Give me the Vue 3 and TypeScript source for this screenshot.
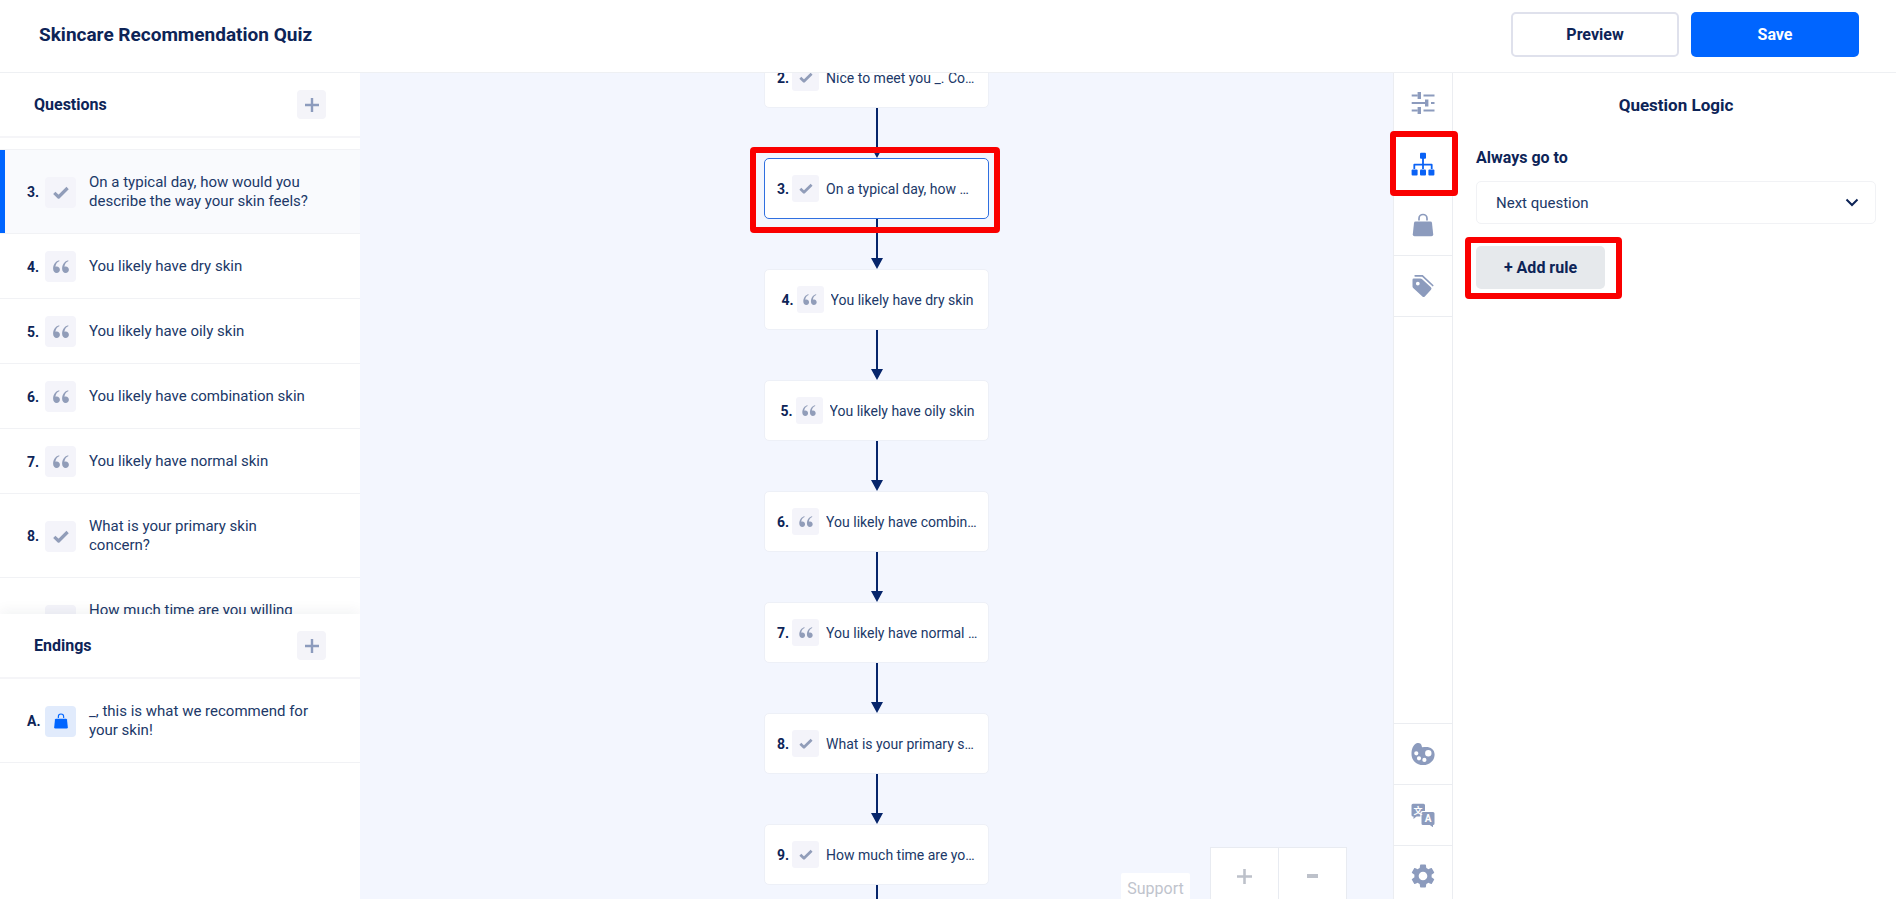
<script setup lang="ts">
import { ref } from 'vue'

type Kind = 'check' | 'quote'
interface Question {
  id: number
  kind: Kind
  title: string
}

const quizName = 'Skincare Recommendation Quiz'
const selectedId = ref(3)
const target = ref('next')
const activeTab = ref('logic')

const questions: Question[] = [
  { id: 3, kind: 'check', title: 'On a typical day, how would you describe the way your skin feels?' },
  { id: 4, kind: 'quote', title: 'You likely have dry skin' },
  { id: 5, kind: 'quote', title: 'You likely have oily skin' },
  { id: 6, kind: 'quote', title: 'You likely have combination skin' },
  { id: 7, kind: 'quote', title: 'You likely have normal skin' },
  { id: 8, kind: 'check', title: 'What is your primary skin concern?' },
  { id: 9, kind: 'check', title: 'How much time are you willing to\u00a0spend?' },
]

const nodes: Question[] = [{ id: 2, kind: 'check', title: 'Nice to meet you _. Could you tell us more?' }, ...questions]

const topTabs = [
  { id: 'sliders', label: 'Properties' },
  { id: 'logic', label: 'Logic' },
  { id: 'bag', label: 'Products' },
  { id: 'tags', label: 'Tags' },
]
const bottomTabs = [
  { id: 'palette', label: 'Design' },
  { id: 'translate', label: 'Translations' },
  { id: 'gear', label: 'Settings' },
]
</script>

<template>
  <div class="app">
    <svg class="sprite" aria-hidden="true">
      <symbol id="i-check" viewBox="0 0 16 13">
        <path d="M1.3 6.8 5.6 11 14.6 2" fill="none" stroke="currentColor" stroke-width="3.2" stroke-linejoin="round" />
      </symbol>
      <symbol id="i-quote" viewBox="0 0 16 13">
        <path d="M6.3.2C2.6 1 .1 4.4.1 8.8.1 11.4 1.6 13 3.6 13c1.9 0 3.3-1.4 3.3-3.3S5.500 6.400 3.800 6.400c-.5 0-1 .1-1.400.3C2.700 4 4 2.100 6.300 1.200z" fill="currentColor" />
        <path d="M15.3.2C11.6 1 9.1 4.4 9.1 8.8c0 2.600 1.500 4.200 3.500 4.200 1.900 0 3.300-1.400 3.300-3.300s-1.400-3.300-3.100-3.300c-.5 0-1 .1-1.400.3.3-2.700 1.600-4.600 3.900-5.500z" fill="currentColor" />
      </symbol>
      <symbol id="i-bag" viewBox="0 0 24 24">
        <path d="M8 7.5V5.5a4 4 0 0 1 8 0v2" fill="none" stroke="currentColor" stroke-width="1.7" />
        <path d="M4.6 8.5h14.8q1.4 0 1.6 1.4l1.2 11.3q.1 2-1.8 2H3.6q-1.9 0-1.8-2L3 9.9q.2-1.4 1.6-1.4z" fill="currentColor" />
      </symbol>
      <symbol id="i-sliders" viewBox="0 0 24 24">
        <path d="M.7 4.5h6M12.5 4.5h11M.7 12h14M20 12h3.5M.7 19.5h6M12.5 19.5h11" stroke="currentColor" stroke-width="1.8" />
        <path d="M8.3 1v7M15.7 8.5v7M8.3 16v7" stroke="currentColor" stroke-width="3.4" />
      </symbol>
      <symbol id="i-logic" viewBox="0 0 24 24">
        <path d="M12 6v11M3.3 17v-4.3h17.4V17" fill="none" stroke="currentColor" stroke-width="1.8" stroke-linejoin="round" />
        <g fill="currentColor">
          <rect x="9" y=".7" width="6" height="6" rx="1" />
          <rect x=".6" y="17.5" width="6" height="6" rx="1" />
          <rect x="9" y="17.5" width="6" height="6" rx="1" />
          <rect x="17.4" y="17.5" width="6" height="6" rx="1" />
        </g>
      </symbol>
      <symbol id="i-tags" viewBox="0 0 24 24">
        <path fill-rule="evenodd" fill="currentColor" d="M1.5 5.8q0-1.3 1.3-1.3h6.5q.9 0 1.6.6l9 8.2q1.2 1.2.1 2.4l-6.2 6.7q-1.2 1.2-2.4.1L2.2 14.1q-.7-.7-.7-1.6zM6.8 7.700a1.900 1.900 0 1 0 0 3.800 1.900 1.900 0 0 0 0-3.800z" />
        <path d="M4.2 1.8h7.2l10.3 9.700" fill="none" stroke="currentColor" stroke-width="1.7" stroke-linecap="round" />
      </symbol>
      <symbol id="i-palette" viewBox="0 0 24 24">
        <path fill-rule="evenodd" fill="currentColor" d="M5.500 1.300C8 .2 10.500 1.500 10.700 4c.1 1.700 1.500 1.100 3.300 1 5.200-.4 9.600 2.300 9.600 7.600 0 6-4.900 10.500-11.500 10.500C5.400 23.100.5 18.600.5 12 .5 7.400 2 3 5.500 1.300zM17.300 8a3.200 3.200 0 1 0 0 6.400 3.200 3.200 0 0 0 0-6.400zM5.300 9.200a2.100 2.100 0 1 0 0 4.200 2.100 2.100 0 0 0 0-4.200zM8 14.200a2.100 2.100 0 1 0 0 4.200 2.100 2.100 0 0 0 0-4.200zM13.400 15.800a2.100 2.100 0 1 0 0 4.200 2.100 2.100 0 0 0 0-4.200z" />
      </symbol>
      <symbol id="i-gear" viewBox="2 2 20 20">
        <path fill="currentColor" d="M19.14 12.94c.04-.3.06-.61.06-.94 0-.32-.02-.64-.07-.94l2.03-1.58c.18-.14.23-.41.12-.61l-1.92-3.32c-.12-.22-.37-.29-.59-.22l-2.39.96c-.5-.38-1.03-.7-1.62-.94l-.36-2.54c-.04-.24-.24-.41-.48-.41h-3.84c-.24 0-.43.17-.47.41l-.36 2.54c-.59.24-1.13.57-1.62.94l-2.39-.96c-.22-.08-.47 0-.59.22L2.74 8.87c-.12.21-.08.47.12.61l2.03 1.58c-.05.3-.09.63-.09.94s.02.64.07.94l-2.03 1.58c-.18.14-.23.41-.12.61l1.92 3.32c.12.22.37.29.59.22l2.39-.96c.5.38 1.03.7 1.62.94l.36 2.54c.05.24.24.41.48.41h3.84c.24 0 .44-.17.47-.41l.36-2.54c.59-.24 1.13-.56 1.62-.94l2.39.96c.22.08.47 0 .59-.22l1.92-3.32c.12-.22.07-.47-.12-.61l-2.01-1.58zM12 15.6c-1.98 0-3.6-1.62-3.6-3.6s1.62-3.6 3.6-3.6 3.6 1.62 3.6 3.6-1.62 3.6-3.6 3.6z" />
      </symbol>
      <symbol id="i-plus" viewBox="0 0 14 14">
        <path d="M7 0v14M0 7h14" stroke="currentColor" stroke-width="2.4" />
      </symbol>
    </svg>

    <header class="topbar">
      <h1>{{ quizName }}</h1>
      <div class="actions">
        <button class="btn preview" type="button">Preview</button>
        <button class="btn save" type="button">Save</button>
      </div>
    </header>

    <div class="workspace">
      <aside class="sidebar">
        <section class="questions">
          <div class="section-head">
            <h2>Questions</h2>
            <button class="add" type="button" aria-label="Add question"><svg><use href="#i-plus" /></svg></button>
          </div>
          <ul class="list scrolled">
            <li v-for="q in questions" :key="q.id">
              <button class="item" :class="{ active: q.id === selectedId }" type="button" @click="selectedId = q.id">
                <span class="num">{{ q.id }}.</span>
                <span class="badge"><svg><use :href="'#i-' + q.kind" /></svg></span>
                <span class="label">{{ q.title }}</span>
              </button>
            </li>
          </ul>
        </section>

        <section class="endings">
          <div class="section-head">
            <h2>Endings</h2>
            <button class="add" type="button" aria-label="Add ending"><svg><use href="#i-plus" /></svg></button>
          </div>
          <ul class="list">
            <li>
              <button class="item" type="button">
                <span class="num">A.</span>
                <span class="badge product"><svg><use href="#i-bag" /></svg></span>
                <span class="label">_, this is what we recommend for your skin!</span>
              </button>
            </li>
          </ul>
        </section>
      </aside>

      <main class="canvas">
        <div class="flow">
          <div v-for="n in nodes" :key="n.id" class="step">
            <button class="node" :class="{ active: n.id === selectedId }" type="button" @click="selectedId = n.id">
              <span class="num">{{ n.id }}.</span>
              <span class="badge"><svg><use :href="'#i-' + n.kind" /></svg></span>
              <span class="label">{{ n.title }}</span>
            </button>
            <span v-if="n.id === 3" class="highlight"></span>
            <svg class="arrow" viewBox="0 0 12 50"><path d="M5 0h2v39h5L6 50 0 39h5z" /></svg>
          </div>
        </div>
        <button class="support" type="button">Support</button>
        <div class="zoom">
          <button type="button" aria-label="Zoom in"><svg><use href="#i-plus" /></svg></button>
          <button type="button" aria-label="Zoom out"><span class="minus"></span></button>
        </div>
      </main>

      <nav class="rail">
        <div>
          <button v-for="t in topTabs" :key="t.id" class="tab" :class="{ active: t.id === activeTab }" type="button" :aria-label="t.label" @click="activeTab = t.id">
            <svg><use :href="'#i-' + t.id" /></svg>
            <span v-if="t.id === 'logic'" class="highlight"></span>
          </button>
        </div>
        <div class="rail-bottom">
          <button v-for="t in bottomTabs" :key="t.id" class="tab" type="button" :aria-label="t.label">
            <svg v-if="t.id === 'translate'" viewBox="0 0 24 24">
              <path d="M2 .7h10.500q1.500 0 1.500 1.500V8h-2.500q-2.200 0-2.200 2.200v3.300H5.500L2.500 16v-2.500H2Q.5 13.500.5 12V2.200Q.5.7 2 .7z" fill="currentColor" />
              <path d="M12 9h10q1.500 0 1.500 1.500v10q0 1.500-1.500 1.500v2.300L18.800 22H12q-1.500 0-1.500-1.500v-10Q10.500 9 12 9z" fill="currentColor" />
              <text x="7" y="10.500" class="cjk">文</text>
              <text x="17" y="19.200" class="latin">A</text>
            </svg>
            <svg v-else><use :href="'#i-' + t.id" /></svg>
          </button>
        </div>
      </nav>

      <aside class="panel">
        <h2>Question Logic</h2>
        <label for="goto">Always go to</label>
        <div class="select">
          <select id="goto" v-model="target">
            <option value="next">Next question</option>
          </select>
          <svg viewBox="0 0 14 9"><path d="M1.500 1.500 7 7l5.500-5.500" /></svg>
        </div>
        <div class="rule">
          <button class="add-rule" type="button">+ Add rule</button>
          <span class="highlight"></span>
        </div>
      </aside>
    </div>
  </div>
</template>

<style>
body {
  overflow: hidden;
}
</style>

<style scoped>
.app {
  --ink: #0d2457;
  --text: #203868;
  --line: #f1f2f5;
  --muted: #8c9bbd;
  height: 100vh;
  display: flex;
  flex-direction: column;
  overflow: hidden;
  background: #fff;
  color: var(--ink);
  font-family: Roboto, "Liberation Sans", sans-serif;
}
.app * {
  box-sizing: border-box;
}
button {
  font: inherit;
  color: inherit;
  border: 0;
  padding: 0;
  background: none;
  cursor: pointer;
}
h1,
h2,
ul {
  margin: 0;
  padding: 0;
  list-style: none;
}
.sprite {
  position: absolute;
  width: 0;
  height: 0;
}
.topbar {
  flex: none;
  height: 73px;
  padding: 0 37px 4px 39px;
  display: flex;
  align-items: center;
  justify-content: space-between;
  border-bottom: 1px solid #eef0f3;
}
h1 {
  font-size: 19px;
  font-weight: 700;
}
h2 {
  font-size: 16px;
  font-weight: 700;
}
.actions {
  display: flex;
  gap: 12px;
}
.btn {
  width: 168px;
  height: 45px;
  border-radius: 5px;
  font-size: 16px;
  font-weight: 700;
}
.preview {
  border: 2px solid #dfe1ec;
}
.save {
  background: #0065ff;
  color: #fff;
}
.workspace {
  flex: 1;
  min-height: 0;
  display: flex;
}

.sidebar {
  width: 360px;
  flex: none;
  display: flex;
  flex-direction: column;
}
.questions {
  flex: 1;
  min-height: 0;
  display: flex;
  flex-direction: column;
  overflow: hidden;
}
.endings {
  flex: 0 0 285px;
  position: relative;
  background: #fff;
  box-shadow: 0 -4px 12px rgba(20, 30, 60, 0.05);
  clip-path: inset(-16px 0 0 0);
}
.section-head {
  flex: none;
  height: 65px;
  padding: 0 34px;
  display: flex;
  align-items: center;
  justify-content: space-between;
  border-bottom: 2px solid #f5f5f8;
}
.add {
  width: 29px;
  height: 29px;
  display: grid;
  place-items: center;
  border-radius: 4px;
  background: #f4f4f9;
  color: var(--muted);
}
.add svg {
  width: 14px;
  height: 14px;
}
.list.scrolled {
  padding-top: 11px;
}
.list.scrolled li:first-child {
  border-top: 1px solid var(--line);
}
.item {
  width: 100%;
  min-height: 65px;
  padding: 23px 48px 22px 27px;
  display: flex;
  align-items: center;
  border-bottom: 1px solid var(--line);
  text-align: left;
}
.item .num {
  width: 18px;
  font-size: 14px;
  font-weight: 700;
}
.item .badge {
  width: 31px;
  height: 31px;
  margin: -6px 13px -6px 0;
}
.item .label {
  flex: 1;
  font-size: 15px;
  line-height: 19px;
}
.item.active {
  background: #f9fafd;
  box-shadow: inset 5px 0 #0065ff;
}
.label {
  color: var(--text);
}
.badge {
  flex: none;
  display: grid;
  place-items: center;
  border-radius: 4px;
  background: #f4f4fa;
  color: #919db9;
}
.badge svg {
  width: 16px;
  height: 13px;
}
.badge.product {
  background: #e1ebfc;
  color: #0065ff;
}
.badge.product svg {
  height: 16px;
}

.canvas {
  flex: 1;
  min-width: 0;
  position: relative;
  overflow: hidden;
  background: #f3f6fe;
}
.flow {
  display: flex;
  flex-direction: column;
  align-items: center;
  margin-top: -26px;
}
.step {
  flex: none;
  width: 225px;
  position: relative;
  display: flex;
  flex-direction: column;
  align-items: center;
}
.node {
  width: 225px;
  height: 61px;
  padding: 0 10px 0 12px;
  display: flex;
  align-items: center;
  justify-content: center;
  border: 1px solid #edf0f7;
  border-radius: 5px;
  background: #fff;
}
.node.active {
  border-color: #2f6fe0;
}
.node .num {
  margin-right: 3px;
  font-size: 14px;
  font-weight: 700;
}
.node .badge {
  width: 27px;
  height: 27px;
  margin-right: 7px;
  border-radius: 3px;
}
.node .badge svg {
  width: 14px;
  height: 11px;
}
.node .label {
  min-width: 0;
  font-size: 14px;
  line-height: 20px;
  overflow: hidden;
  white-space: nowrap;
  text-overflow: ellipsis;
}
.arrow {
  width: 12px;
  height: 50px;
  fill: #06256b;
}
.highlight {
  position: absolute;
  border: 6px solid #fa0000;
  border-radius: 4px;
  pointer-events: none;
}
.step .highlight {
  inset: -11px -11px 36px -14px;
}
.tab .highlight {
  inset: -3px -6px -2px -4px;
}
.rule .highlight {
  inset: -9px -17px -10px -11px;
}
.support {
  position: absolute;
  right: 203px;
  bottom: -4px;
  width: 69px;
  height: 30px;
  background: #fff;
  border-radius: 2px;
  color: #bfc4cd;
  font-size: 16px;
}
.zoom {
  position: absolute;
  right: 46px;
  bottom: -8px;
  display: flex;
  height: 60px;
  border: 1px solid #e8ebf1;
  background: #fff;
  color: #bdc1ca;
}
.zoom button {
  width: 67px;
  padding-bottom: 2px;
  display: grid;
  place-items: center;
}
.zoom button + button {
  width: 68px;
  border-left: 1px solid #e8ebf1;
}
.zoom svg {
  width: 15px;
  height: 15px;
}
.minus {
  width: 11px;
  height: 4px;
  background: currentColor;
}

.rail {
  flex: none;
  width: 60px;
  display: flex;
  flex-direction: column;
  justify-content: space-between;
  border: solid #ebedf1;
  border-width: 0 1px;
}
.rail-bottom {
  margin-bottom: -7px;
}
.tab {
  position: relative;
  width: 100%;
  height: 61px;
  display: grid;
  place-items: center;
  border-bottom: 1px solid #ebedf1;
  color: var(--muted);
}
.rail-bottom .tab {
  border-top: 1px solid #ebedf1;
  border-bottom: 0;
}
.tab.active {
  color: #0a62f5;
}
.tab svg {
  width: 24px;
  height: 24px;
}
.tab text {
  fill: #fff;
  text-anchor: middle;
  font-weight: 700;
}
.cjk {
  font-family: "Noto Sans CJK SC", sans-serif;
  font-size: 9px;
}
.latin {
  font-size: 10px;
}

.panel {
  flex: none;
  width: 443px;
  padding: 22px 20px 0 23px;
  display: flex;
  flex-direction: column;
}
.panel h2 {
  font-size: 17px;
  line-height: 20px;
  text-align: center;
}
.panel label {
  margin: 33px 0 13px;
  font-size: 16px;
  line-height: 20px;
  font-weight: 700;
}
.select {
  position: relative;
}
.select select {
  width: 100%;
  height: 43px;
  padding: 0 19px;
  appearance: none;
  border: 1px solid var(--line);
  border-radius: 5px;
  background: #fff;
  color: var(--text);
  font: 15px Roboto, sans-serif;
}
.select svg {
  position: absolute;
  right: 17px;
  top: 17px;
  width: 14px;
  height: 9px;
  fill: none;
  stroke: var(--ink);
  stroke-width: 2;
  pointer-events: none;
}
.rule {
  position: relative;
  align-self: flex-start;
  margin-top: 22px;
}
.add-rule {
  display: block;
  width: 129px;
  height: 43px;
  border-radius: 5px;
  background: #e6e9ec;
  font-size: 16px;
  font-weight: 700;
}
</style>
